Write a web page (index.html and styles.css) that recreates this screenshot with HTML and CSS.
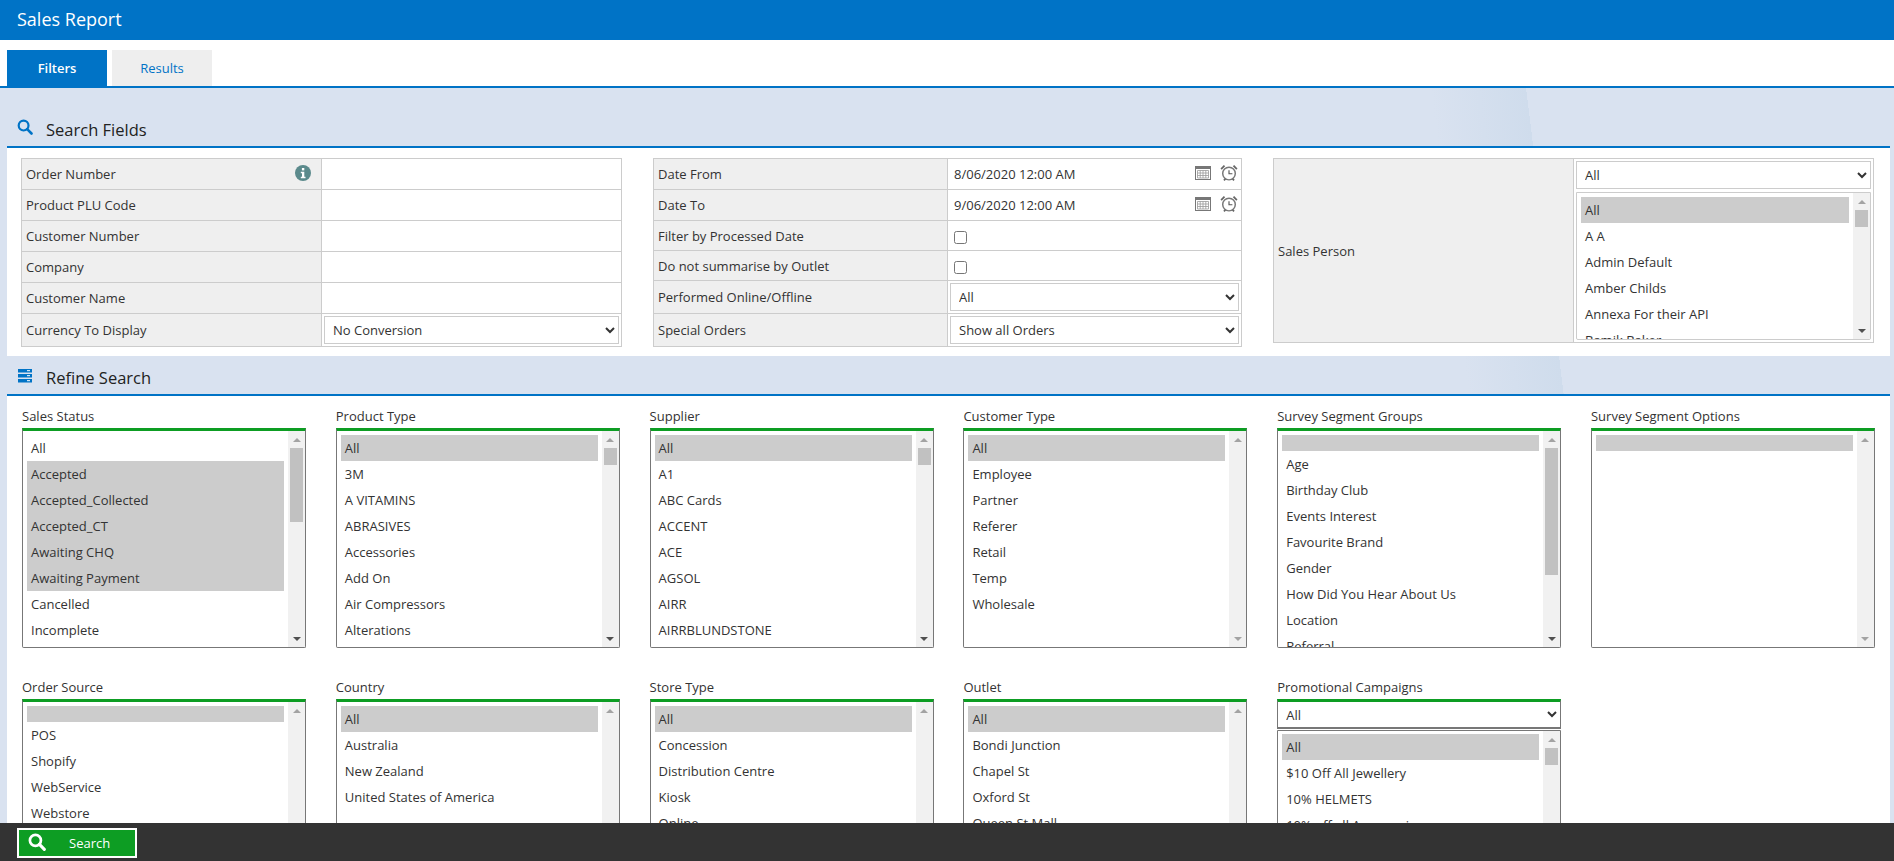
FILE: index.html
```html
<!DOCTYPE html>
<html lang="en">
<head>
    <meta charset="UTF-8">
    <title>Sales Report</title>
    <link rel="stylesheet" href="styles.css">
</head>
<body>
    <header class="page-title">Sales Report</header>

    <nav class="tabs">
        <a class="tab active">Filters</a>
        <a class="tab">Results</a>
    </nav>

    <main class="content">
        <h2 class="section-head">
            <svg class="head-icon" viewBox="0 0 16 16"><circle cx="6.6" cy="6.6" r="4.9" fill="none" stroke="#0073c6" stroke-width="2.2"/><path d="M10.2 10.2l4.3 4.3" stroke="#0073c6" stroke-width="2.6" stroke-linecap="round"/></svg>
            Search Fields
        </h2>

        <section class="panel search-fields">
            <table class="fields">
                <tr><th class="has-info">Order Number
                    <svg class="info" viewBox="0 0 16 16"><circle cx="8" cy="8" r="8" fill="#5b8a8c"/><rect x="6.9" y="3" width="2.4" height="2.4" fill="#fff"/><path d="M5.8 6.8h3.5v5h1.2v1.4H5.8v-1.4h1.2V8.2H5.8z" fill="#fff"/></svg>
                </th><td></td></tr>
                <tr><th>Product PLU Code</th><td></td></tr>
                <tr><th>Customer Number</th><td></td></tr>
                <tr><th>Company</th><td></td></tr>
                <tr><th>Customer Name</th><td></td></tr>
                <tr><th>Currency To Display</th><td class="has-select"><select class="drop"><option>No Conversion</option></select></td></tr>
            </table>

            <table class="fields">
                <tr><th>Date From</th><td class="date-cell"><span>8/06/2020 12:00 AM</span><span class="date-icons">
                    <svg class="cal" viewBox="0 0 16 14"><rect x=".5" y=".5" width="15" height="13" fill="#fff" stroke="#777"/><rect x="1" y="1" width="14" height="2" fill="#777"/><path d="M2.5 4.5h11v7.5h-11zM2.5 7h11M2.5 9.5h11M5.2 4.5v7.5M8 4.5v7.5M10.8 4.5v7.5" fill="none" stroke="#999" stroke-width=".8"/></svg>
                    <svg class="clock" viewBox="0 0 16 16"><path d="M1 4.5L4 1.5M15 4.5L12 1.5M3.5 14.5l1.5-1.5M12.5 14.5L11 13" stroke="#666" stroke-width="1.6"/><circle cx="8" cy="8.5" r="5.6" fill="#fff" stroke="#777" stroke-width="1.3"/><path d="M8 5.5v3.2h3" fill="none" stroke="#555"/></svg>
                </span></td></tr>
                <tr><th>Date To</th><td class="date-cell"><span>9/06/2020 12:00 AM</span><span class="date-icons">
                    <svg class="cal" viewBox="0 0 16 14"><rect x=".5" y=".5" width="15" height="13" fill="#fff" stroke="#777"/><rect x="1" y="1" width="14" height="2" fill="#777"/><path d="M2.5 4.5h11v7.5h-11zM2.5 7h11M2.5 9.5h11M5.2 4.5v7.5M8 4.5v7.5M10.8 4.5v7.5" fill="none" stroke="#999" stroke-width=".8"/></svg>
                    <svg class="clock" viewBox="0 0 16 16"><path d="M1 4.5L4 1.5M15 4.5L12 1.5M3.5 14.5l1.5-1.5M12.5 14.5L11 13" stroke="#666" stroke-width="1.6"/><circle cx="8" cy="8.5" r="5.6" fill="#fff" stroke="#777" stroke-width="1.3"/><path d="M8 5.5v3.2h3" fill="none" stroke="#555"/></svg>
                </span></td></tr>
                <tr class="check-row"><th>Filter by Processed Date</th><td><input type="checkbox"></td></tr>
                <tr class="check-row"><th>Do not summarise by Outlet</th><td><input type="checkbox"></td></tr>
                <tr><th>Performed Online/Offline</th><td class="has-select"><select class="drop"><option>All</option></select></td></tr>
                <tr><th>Special Orders</th><td class="has-select"><select class="drop"><option>Show all Orders</option></select></td></tr>
            </table>

            <table class="fields person">
                <tr><th>Sales Person</th><td class="has-select">
                    <select class="drop"><option>All</option></select>
                    <div class="list-box grey">
                        <select class="list" multiple>
                            <option selected>All</option>
                            <option>A A</option>
                            <option>Admin Default</option>
                            <option>Amber Childs</option>
                            <option>Annexa For their API</option>
                            <option>Bamik Baker</option>
                        </select>
                        <div class="bar"><i class="arrow up"></i><span class="track"><b class="thumb"></b></span><i class="arrow down"></i></div>
                    </div>
                </td></tr>
            </table>
        </section>

        <h2 class="section-head second">
            <svg class="head-icon" viewBox="0 0 16 14"><path d="M1 0h14v3.4H1zM1 5h14v3.4H1zM1 10h14v3.4H1z" fill="#0073c6"/><path d="M10 1.7h3M10 6.7h3M10 11.7h3" stroke="#fff"/></svg>
            Refine Search
        </h2>

        <section class="panel refine">
            <div class="filter">
                <label>Sales Status</label>
                <div class="list-box">
                    <select class="list" multiple>
                        <option>All</option>
                        <option selected>Accepted</option>
                        <option selected>Accepted_Collected</option>
                        <option selected>Accepted_CT</option>
                        <option selected>Awaiting CHQ</option>
                        <option selected>Awaiting Payment</option>
                        <option>Cancelled</option>
                        <option>Incomplete</option>
                    </select>
                    <div class="bar"><i class="arrow up"></i><span class="track"><b class="thumb long"></b></span><i class="arrow down"></i></div>
                </div>
            </div>
            <div class="filter">
                <label>Product Type</label>
                <div class="list-box">
                    <select class="list" multiple>
                        <option selected>All</option>
                        <option>3M</option>
                        <option>A VITAMINS</option>
                        <option>ABRASIVES</option>
                        <option>Accessories</option>
                        <option>Add On</option>
                        <option>Air Compressors</option>
                        <option>Alterations</option>
                    </select>
                    <div class="bar"><i class="arrow up"></i><span class="track"><b class="thumb"></b></span><i class="arrow down"></i></div>
                </div>
            </div>
            <div class="filter">
                <label>Supplier</label>
                <div class="list-box">
                    <select class="list" multiple>
                        <option selected>All</option>
                        <option>A1</option>
                        <option>ABC Cards</option>
                        <option>ACCENT</option>
                        <option>ACE</option>
                        <option>AGSOL</option>
                        <option>AIRR</option>
                        <option>AIRRBLUNDSTONE</option>
                    </select>
                    <div class="bar"><i class="arrow up"></i><span class="track"><b class="thumb"></b></span><i class="arrow down"></i></div>
                </div>
            </div>
            <div class="filter">
                <label>Customer Type</label>
                <div class="list-box">
                    <select class="list" multiple>
                        <option selected>All</option>
                        <option>Employee</option>
                        <option>Partner</option>
                        <option>Referer</option>
                        <option>Retail</option>
                        <option>Temp</option>
                        <option>Wholesale</option>
                    </select>
                    <div class="bar off"><i class="arrow up"></i><span class="track"></span><i class="arrow down"></i></div>
                </div>
            </div>
            <div class="filter">
                <label>Survey Segment Groups</label>
                <div class="list-box">
                    <select class="list" multiple>
                        <option class="blank" selected></option>
                        <option>Age</option>
                        <option>Birthday Club</option>
                        <option>Events Interest</option>
                        <option>Favourite Brand</option>
                        <option>Gender</option>
                        <option>How Did You Hear About Us</option>
                        <option>Location</option>
                        <option>Referral</option>
                    </select>
                    <div class="bar"><i class="arrow up"></i><span class="track"><b class="thumb longer"></b></span><i class="arrow down"></i></div>
                </div>
            </div>
            <div class="filter">
                <label>Survey Segment Options</label>
                <div class="list-box">
                    <select class="list" multiple>
                        <option class="blank" selected></option>
                    </select>
                    <div class="bar off"><i class="arrow up"></i><span class="track"></span><i class="arrow down"></i></div>
                </div>
            </div>

            <div class="filter">
                <label>Order Source</label>
                <div class="list-box">
                    <select class="list" multiple>
                        <option class="blank" selected></option>
                        <option>POS</option>
                        <option>Shopify</option>
                        <option>WebService</option>
                        <option>Webstore</option>
                    </select>
                    <div class="bar off"><i class="arrow up"></i><span class="track"></span><i class="arrow down"></i></div>
                </div>
            </div>
            <div class="filter">
                <label>Country</label>
                <div class="list-box">
                    <select class="list" multiple>
                        <option selected>All</option>
                        <option>Australia</option>
                        <option>New Zealand</option>
                        <option>United States of America</option>
                    </select>
                    <div class="bar off"><i class="arrow up"></i><span class="track"></span><i class="arrow down"></i></div>
                </div>
            </div>
            <div class="filter">
                <label>Store Type</label>
                <div class="list-box">
                    <select class="list" multiple>
                        <option selected>All</option>
                        <option>Concession</option>
                        <option>Distribution Centre</option>
                        <option>Kiosk</option>
                        <option>Online</option>
                    </select>
                    <div class="bar off"><i class="arrow up"></i><span class="track"></span><i class="arrow down"></i></div>
                </div>
            </div>
            <div class="filter">
                <label>Outlet</label>
                <div class="list-box">
                    <select class="list" multiple>
                        <option selected>All</option>
                        <option>Bondi Junction</option>
                        <option>Chapel St</option>
                        <option>Oxford St</option>
                        <option>Queen St Mall</option>
                    </select>
                    <div class="bar off"><i class="arrow up"></i><span class="track"></span><i class="arrow down"></i></div>
                </div>
            </div>
            <div class="filter">
                <label>Promotional Campaigns</label>
                <select class="drop green"><option>All</option></select>
                <div class="list-box plain">
                    <select class="list" multiple>
                        <option selected>All</option>
                        <option>$10 Off All Jewellery</option>
                        <option>10% HELMETS</option>
                        <option>10% off all Accessories</option>
                    </select>
                    <div class="bar"><i class="arrow up"></i><span class="track"><b class="thumb"></b></span><i class="arrow down"></i></div>
                </div>
            </div>
        </section>
    </main>

    <footer class="action-bar">
        <button class="search-btn" type="button">
            <svg viewBox="0 0 16 16"><circle cx="6.6" cy="6.6" r="4.9" fill="none" stroke="#fff" stroke-width="2.4"/><path d="M10.2 10.2l4.3 4.3" stroke="#fff" stroke-width="2.8" stroke-linecap="round"/></svg>
            <span>Search</span>
        </button>
    </footer>
</body>
</html>
```

FILE: styles.css
```css
:root {
    --blue: #0073c6;
    --page-bg: #d9e2f0;
    --label-bg: #efefef;
    --line: #cccccc;
    --green: #0d9d23;
    --text: #333333;
}

html, body {
    margin: 0;
    height: 100%;
    overflow: hidden;
}

body {
    font-family: "Open Sans", "Noto Sans", sans-serif;
    font-size: 13px;
    color: var(--text);
    background-color: #fff;
}

.page-title {
    height: 40px;
    line-height: 38px;
    padding-left: 17px;
    background-color: var(--blue);
    color: #fff;
    font-size: 18px;
}

.tabs {
    display: flex;
    gap: 5px;
    height: 36px;
    padding: 10px 0 0 7px;
    border-bottom: 2px solid var(--blue);
}

.tab {
    width: 100px;
    line-height: 36px;
    text-align: center;
    background-color: #eeeeee;
    color: var(--blue);
}

.tab.active {
    background-color: var(--blue);
    color: #fff;
    font-weight: 600;
}

.content {
    padding: 0 4px 0 7px;
    height: 773px;
    overflow: hidden;
    background-color: var(--page-bg);
    background-image: linear-gradient(83deg, transparent 76.7%, #cfdcec 81.5%, transparent 81.5%);
}

.section-head {
    display: flex;
    align-items: center;
    height: 60px;
    box-sizing: border-box;
    padding: 24px 0 0 10px;
    margin: 0;
    border-bottom: 2px solid var(--blue);
    color: #222222;
    font-size: 16.5px;
    font-weight: 400;
}

.section-head.second {
    height: 40px;
    padding-top: 5px;
}

.head-icon {
    width: 16px;
    height: 16px;
    margin-right: 13px;
    margin-top: -4px;
}

.panel {
    background-color: #fff;
}

.search-fields {
    display: grid;
    grid-template-columns: 601px 589px 601px;
    justify-content: start;
    column-gap: 31px;
    align-items: start;
    height: 208px;
    padding: 10px 0 0 14px;
    box-sizing: border-box;
}

.fields {
    border-collapse: collapse;
    width: 100%;
    table-layout: fixed;
}

.fields th,
.fields td {
    border: 1px solid var(--line);
    height: 31px;
    padding: 0;
    box-sizing: border-box;
}

.fields .check-row th,
.fields .check-row td {
    height: 30px;
}

.fields th {
    padding-left: 4px;
    background-color: var(--label-bg);
    font-weight: 400;
    text-align: left;
}

.has-info {
    position: relative;
}

.info {
    position: absolute;
    right: 10px;
    top: 6px;
    width: 16px;
    height: 16px;
}

.date-cell {
    position: relative;
    padding: 0 6px !important;
}

.date-icons {
    position: absolute;
    right: 3px;
    top: 5px;
    display: flex;
    align-items: center;
    gap: 9px;
}

.cal {
    width: 16px;
    height: 14px;
}

.clock {
    width: 18px;
    height: 18px;
}

.check-row input {
    display: block;
    width: 13px;
    height: 13px;
    margin: 3px 0 0 6px;
}

.has-select {
    padding: 2px !important;
}

.drop {
    display: block;
    width: 100%;
    height: 28px;
    padding: 0 0 0 4px;
    border: 1px solid var(--line);
    background-color: #fff;
    font: inherit;
    color: var(--text);
}

.person th {
    height: 184px;
}

.refine {
    display: grid;
    grid-template-columns: repeat(6, 284px);
    column-gap: 29.8px;
    row-gap: 31px;
    align-content: start;
    height: 465px;
    box-sizing: border-box;
    padding: 12px 0 0 15px;
}

.filter label {
    display: block;
    height: 20px;
    line-height: 16px;
    color: var(--text);
}

/* list plus a drawn scrollbar beside it */
.list-box {
    display: flex;
    height: 220px;
    box-sizing: border-box;
    border: 1px solid #777777;
    border-top: 3px solid var(--green);
    border-radius: 0 0 2px 2px;
    background-color: #fff;
}

.list-box.grey {
    height: 148px;
    margin-top: 3px;
    border: 1px solid var(--line);
}

.list-box.plain {
    margin-top: 1px;
    border-top: 1px solid #777777;
}

.list {
    flex: 1;
    min-width: 0;
    height: 100%;
    box-sizing: border-box;
    padding: 4px;
    margin: 0;
    border: none;
    font: inherit;
    color: var(--text);
    outline: none;
}

.list-box.plain .list {
    padding-top: 3px;
}

.list option {
    height: 26px;
    padding: 4px 4px 0;
    box-sizing: border-box;
}

.list option:checked {
    background: linear-gradient(#cccccc, #cccccc);
    color: var(--text);
}

.list option.blank {
    height: 16px;
}

.bar {
    display: flex;
    flex-direction: column;
    width: 17px;
    flex-shrink: 0;
    background-color: #f1f1f1;
}

.arrow {
    display: flex;
    align-items: center;
    justify-content: center;
    height: 17px;
    flex-shrink: 0;
}

.arrow::before {
    content: '';
    border-left: 4px solid transparent;
    border-right: 4px solid transparent;
}

.arrow.up::before {
    border-bottom: 4px solid #a3a3a3;
}

.arrow.down::before {
    border-top: 4px solid #505050;
}

.bar.off .arrow.down::before {
    border-top-color: #a3a3a3;
}

.track {
    flex: 1;
    padding: 0 2px;
}

.thumb {
    display: block;
    height: 17px;
    background-color: #c1c1c1;
}

.thumb.long {
    height: 74px;
}

.thumb.longer {
    height: 127px;
}

.drop.green {
    height: 30px;
    border: 1px solid #777777;
    border-top: 3px solid var(--green);
    border-bottom-width: 2px;
}

.action-bar {
    position: fixed;
    left: 0;
    right: 0;
    bottom: 0;
    height: 38px;
    background-color: #333333;
}

.search-btn {
    display: flex;
    align-items: center;
    width: 120px;
    height: 30px;
    margin: 5px 0 0 17px;
    padding: 0 0 0 9px;
    border: 2px solid #fff;
    background-color: var(--green);
    color: #fff;
    font: inherit;
}

.search-btn svg {
    width: 18px;
    height: 18px;
    margin-top: -3px;
}

.search-btn span {
    margin-left: 23px;
}
```
